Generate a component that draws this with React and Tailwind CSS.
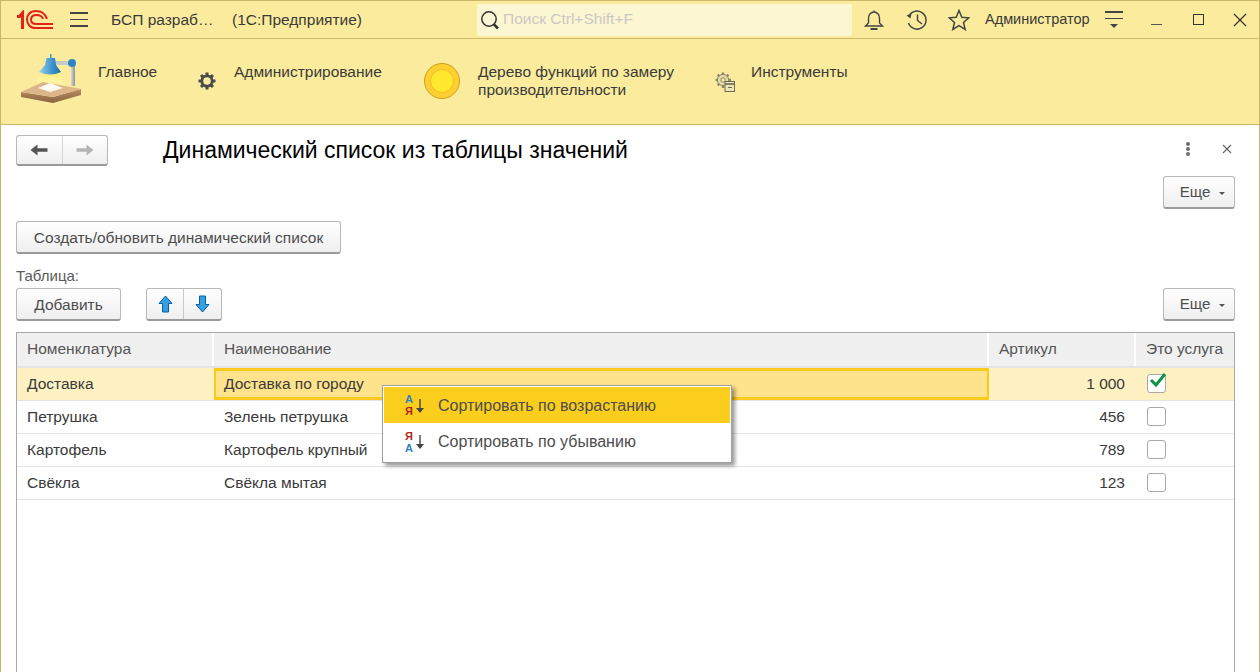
import React from "react";

const rows = [
  { name: "Доставка", title: "Доставка по городу", code: "1 000", service: true, active: true },
  { name: "Петрушка", title: "Зелень петрушка", code: "456" },
  { name: "Картофель", title: "Картофель крупный", code: "789" },
  { name: "Свёкла", title: "Свёкла мытая", code: "123" },
];

const btn =
  "flex items-center justify-center rounded-[3px] border border-[#b8b8b8] border-b-[#9a9a9a] border-b-2 bg-gradient-to-b from-white to-[#efefef] text-[#4d4d4d]";

function Logo() {
  return (
    <svg width="38" height="20" viewBox="0 0 38 20" fill="none" stroke="#e2231a">
      <path d="M1 6.5 H3.5 L6.5 3 V19" strokeWidth="3" />
      <path d="M31 9 C29 3 25 1 20 1 C14 1 11 5 11 9.5 C11 14 14 18 20 18 H37" strokeWidth="2" />
      <path d="M27 9 C26 6 23 5 20.5 5 C17 5 15 7 15 9.5 C15 12 17 14 20.5 14 H37" strokeWidth="2" />
    </svg>
  );
}

function Lamp() {
  return (
    <svg width="62" height="50" viewBox="0 0 62 50">
      <defs>
        <linearGradient id="shade" x1="0" y1="0" x2="1" y2="0">
          <stop offset="0" stopColor="#9ad2f0" />
          <stop offset="0.6" stopColor="#3d93cc" />
          <stop offset="1" stopColor="#1f6fa8" />
        </linearGradient>
        <linearGradient id="beam" x1="0" y1="0" x2="0" y2="1">
          <stop offset="0" stopColor="#fff27a" />
          <stop offset="1" stopColor="#fff9c8" stopOpacity="0.4" />
        </linearGradient>
        <linearGradient id="pole" x1="0" y1="0" x2="1" y2="0">
          <stop offset="0" stopColor="#d8dadb" />
          <stop offset="1" stopColor="#8f9396" />
        </linearGradient>
        <linearGradient id="side" x1="0" y1="0" x2="0" y2="1">
          <stop offset="0" stopColor="#b88d62" />
          <stop offset="1" stopColor="#8a633f" />
        </linearGradient>
      </defs>
      <path d="M33 7 H52 V11 H37 Z" fill="#c6c8c9" />
      <rect x="51" y="9" width="4" height="23" fill="url(#pole)" />
      <path d="M21 19 H39 L46 34 L14 36 Z" fill="url(#beam)" />
      <path d="M1 38 L33 43 L61 35 V41 L33 49 L1 43 Z" fill="url(#side)" />
      <path d="M1 38 L23 28 L61 35 L33 43 Z" fill="#dcb58a" />
      <path d="M18 34 L30 29 L43 34 L30 38 Z" fill="#fdfbf0" />
      <path d="M30 0 H31.5 V4 H35 L36 11 L41 18 Q30 23 19 18 L25 11 L26.5 4 H30 Z" fill="url(#shade)" />
      <circle cx="52" cy="9" r="4" fill="#2a86c4" />
    </svg>
  );
}

function Gear() {
  return (
    <svg width="20" height="20" viewBox="0 0 20 20">
      <g stroke="#4a4a4a" strokeWidth="3">
        <path d="M10 1.5 V18.5 M1.5 10 H18.5 M4 4 L16 16 M16 4 L4 16" />
      </g>
      <circle cx="10" cy="10" r="5.2" fill="#fbec9d" stroke="#4a4a4a" strokeWidth="2.8" />
    </svg>
  );
}

function ToolsIcon() {
  return (
    <svg width="22" height="22" viewBox="0 0 22 22">
      <g stroke="#8a8568" strokeWidth="2.4" fill="none">
        <path d="M9 1.5 V17 M1.5 9 H17 M3.6 3.6 L14.4 14.4 M14.4 3.6 L3.6 14.4" />
      </g>
      <circle cx="9" cy="9" r="5.6" fill="#e6dcab" stroke="#8a8568" />
      <circle cx="9" cy="9" r="2.2" fill="#fbec9d" stroke="#8a8568" />
      <rect x="11" y="10.5" width="9.5" height="10" fill="#efe6b5" stroke="#6d6a55" />
      <path d="M11 13 H20.5" stroke="#6d6a55" strokeWidth="1.6" />
      <path d="M14 16.5 H18" stroke="#6d6a55" />
    </svg>
  );
}

function Arrow({ dir, color }) {
  return (
    <svg width="18" height="14" viewBox="0 0 18 14" fill={color} className={dir === "right" ? "rotate-180" : ""}>
      <path d="M0.5 7 L7.5 1.5 V5.2 H17.5 V8.8 H7.5 V12.5 Z" />
    </svg>
  );
}

function BlueArrow({ down }) {
  return (
    <svg width="15" height="18" viewBox="0 0 15 18" className={down ? "rotate-180" : ""}>
      <path d="M7.5 1 L14 8.5 H10.5 V17 H4.5 V8.5 H1 Z" fill="#35a0e6" stroke="#0f5f94" strokeWidth="1" />
    </svg>
  );
}

function Caret() {
  return <span className="ml-[9px] mt-[2px] h-0 w-0 border-x-[3px] border-t-[3px] border-x-transparent border-t-[#555]" />;
}

function More() {
  return (
    <div className={`${btn} h-[33px] w-[72px] pl-[7px] pt-[1px] text-[15px]`}>
      Еще
      <Caret />
    </div>
  );
}

function SortIcon({ desc }) {
  const red = <span className="text-[#b3261e]">Я</span>;
  const blue = <span className="text-[#2f7fc1]">А</span>;
  return (
    <div className="flex w-[20px] items-center">
      <div className="flex w-[9px] flex-col gap-[1px] text-[11px] font-bold leading-[11px]">
        {desc ? red : blue}
        {desc ? blue : red}
      </div>
      <svg width="10" height="16" viewBox="0 0 10 16" className="ml-[1px]">
        <path d="M5 1 V11" stroke="#444" strokeWidth="1.4" />
        <path d="M1 10 H9 L5 15 Z" fill="#444" />
      </svg>
    </div>
  );
}

function SectionLink({ icon, iconBox, text, textBox }) {
  return (
    <div className="flex">
      <div className={iconBox}>{icon}</div>
      <div className={`pt-[24px] text-[15.5px] leading-[18px] text-[#3a3a3a] ${textBox}`}>{text}</div>
    </div>
  );
}

export default function App() {
  return (
    <div className="relative flex h-[672px] w-[1260px] flex-col overflow-hidden border-x border-t border-[#c9b868] bg-white font-['Liberation_Sans',Arial,sans-serif]">
      {/* top bar */}
      <header className="flex h-[38px] shrink-0 items-center border-b border-[#c9b868] bg-[#fbec9d] text-[15.5px] text-[#3a3a3a]">
        <div className="ml-[15px] w-[54px]">
          <Logo />
        </div>
        <div className="flex w-[18px] flex-col gap-[5px]">
          <span className="h-[1.5px] bg-[#444]" />
          <span className="h-[1.5px] bg-[#444]" />
          <span className="h-[1.5px] bg-[#444]" />
        </div>
        <span className="ml-[23px] w-[121px]">БСП разраб…</span>
        <span className="w-[245px]">(1С:Предприятие)</span>
        <div className="flex h-[32px] w-[375px] items-center rounded-[3px] bg-[#fdf6d2] pl-[3px] text-[#c9c9c3]">
          <svg width="20" height="22" viewBox="0 0 20 22" fill="none" stroke="#333" className="mr-[3px]">
            <circle cx="9" cy="10" r="7.2" strokeWidth="1.5" />
            <path d="M14 15.5 L18 19.5" strokeWidth="2.6" />
          </svg>
          <span className="mb-[2px]">Поиск Ctrl+Shift+F</span>
        </div>
        <svg width="20" height="22" viewBox="0 0 20 22" fill="none" stroke="#444" strokeWidth="1.4" className="ml-[12px]">
          <path d="M10 1.5 V3 M4.5 14 V9 A5.5 6 0 0 1 15.5 9 V14 L18.5 17 H1.5 Z" />
          <path d="M6.5 20 H13.5" strokeWidth="2" />
        </svg>
        <svg width="22" height="22" viewBox="0 0 22 22" fill="none" stroke="#444" strokeWidth="1.5" className="ml-[22px]">
          <path d="M3 7 A9 9 0 1 1 2.5 14" />
          <path d="M0.5 6.5 L4.5 9.5 L5.5 4.5 Z" fill="#444" stroke="none" />
          <path d="M11.5 5.5 V11.5 L16 15" />
        </svg>
        <svg width="22" height="22" viewBox="0 0 22 22" fill="none" stroke="#444" strokeWidth="1.5" className="ml-[20px]">
          <path d="M11 1.5 L13.8 8.2 L20.8 8.8 L15.5 13.4 L17.2 20.5 L11 16.7 L4.8 20.5 L6.5 13.4 L1.2 8.8 L8.2 8.2 Z" />
        </svg>
        <span className="ml-[15px] w-[120px] text-[14.5px]">Администратор</span>
        <div className="flex w-[18px] flex-col items-center">
          <span className="h-[1.5px] w-[18px] bg-[#444]" />
          <span className="mt-[5px] h-[1.5px] w-[18px] bg-[#444]" />
          <span className="mt-[5px] h-0 w-0 border-x-[4px] border-t-[4px] border-x-transparent border-t-[#444]" />
        </div>
        <span className="ml-[28px] mt-[10px] h-[1.5px] w-[11px] bg-[#555]" />
        <span className="ml-[31px] h-[11px] w-[11px] border-[1.5px] border-[#333]" />
        <svg width="14" height="14" viewBox="0 0 14 14" stroke="#333" strokeWidth="1.2" className="ml-[29px]">
          <path d="M1 1 L13 13 M13 1 L1 13" />
        </svg>
      </header>

      {/* sections */}
      <nav className="flex h-[86px] shrink-0 border-b border-[#c9b868] bg-[#fbec9d]">
        <SectionLink icon={<Lamp />} iconBox="ml-[19px] w-[78px] pt-[15px]" text="Главное" textBox="w-[90px]" />
        <SectionLink icon={<Gear />} iconBox="w-[46px] pt-[32px] pl-[9px]" text="Администрирование" textBox="w-[188px]" />
        <SectionLink
          icon={
            <div className="flex h-[36px] w-[36px] items-center justify-center rounded-full border border-[#c9a21c] bg-[#fdcf33]">
              <div className="h-[24px] w-[24px] rounded-full border border-[#f2bf1e] bg-[#ffe82e]" />
            </div>
          }
          iconBox="w-[56px] pt-[24px] pl-[2px]"
          text={
            <>
              Дерево функций по замеру
              <br />
              производительности
            </>
          }
          textBox="w-[234px]"
        />
        <SectionLink icon={<ToolsIcon />} iconBox="w-[39px] pt-[32px] pl-[2px]" text="Инструменты" textBox="w-[110px]" />
      </nav>

      {/* form */}
      <main className="flex min-h-0 flex-1 flex-col pl-[15px] pr-[24px]">
        <div className="mt-[10px] flex h-[31px] items-center">
          <div className={`${btn} h-[31px] w-[92px]`}>
            <div className="flex h-full w-[47px] items-center justify-center border-r border-[#d5d5d5]">
              <Arrow color="#555" />
            </div>
            <div className="flex h-full w-[45px] items-center justify-center">
              <Arrow dir="right" color="#b5b5b5" />
            </div>
          </div>
          <h1 className="ml-[55px] text-[23px] font-normal text-black">Динамический список из таблицы значений</h1>
          <svg width="6" height="14" viewBox="0 0 6 14" fill="#6d6d6d" className="mb-[4px] ml-auto mr-[31px]">
            <circle cx="3" cy="2" r="2" />
            <circle cx="3" cy="7" r="2" />
            <circle cx="3" cy="12" r="2" />
          </svg>
          <svg width="10" height="10" viewBox="0 0 10 10" stroke="#666" strokeWidth="1.2" className="mb-[4px] mr-[3px]">
            <path d="M1 1 L9 9 M9 1 L1 9" />
          </svg>
        </div>

        <div className="mt-[10px] flex justify-end">
          <More />
        </div>

        <div className={`${btn} mt-[12px] h-[33px] w-[325px] pt-[1px] text-[15.5px]`}>Создать/обновить динамический список</div>

        <div className="mt-[13px] h-[17px] text-[15px] leading-[17px] text-[#5a5a5a]">Таблица:</div>

        <div className="mt-[4px] flex">
          <div className={`${btn} h-[33px] w-[105px] pt-[1px] text-[15.5px]`}>Добавить</div>
          <div className={`${btn} ml-[25px] h-[33px] w-[76px]`}>
            <div className="flex h-full w-[38px] items-center justify-center border-r border-[#c9c9c9]">
              <BlueArrow />
            </div>
            <div className="flex h-full w-[38px] items-center justify-center">
              <BlueArrow down />
            </div>
          </div>
          <div className="ml-auto">
            <More />
          </div>
        </div>

        {/* table */}
        <div className="mt-[11px] flex-1 border-x border-t border-[#a8a8a8] text-[15.5px] text-[#3a3a3a]">
          <div className="grid h-[35px] grid-cols-[197px_775px_147px_98px] border-b-2 border-[#e4e4e4] bg-[#f0f0f0] text-[#555]">
            <div className="border-r-2 border-white pl-[10px] leading-[32px]">Номенклатура</div>
            <div className="border-r-2 border-white pl-[10px] leading-[32px]">Наименование</div>
            <div className="border-r-2 border-white pl-[10px] leading-[32px]">Артикул</div>
            <div className="pl-[10px] leading-[32px]">Это услуга</div>
          </div>
          {rows.map((r) => (
            <div
              key={r.name}
              className={`grid h-[33px] grid-cols-[197px_775px_147px_98px] border-b border-[#e4e4e4] ${
                r.active ? "bg-[#fdf1c2]" : "bg-white"
              }`}
            >
              <div className="pl-[10px] leading-[32px]">{r.name}</div>
              {r.active ? (
                <div className="border-[3px] border-l-2 border-r-2 border-[#fcc91d] bg-[#fee28c] pl-[8px] leading-[26px]">
                  {r.title}
                </div>
              ) : (
                <div className="pl-[10px] leading-[32px]">{r.title}</div>
              )}
              <div className="pr-[11px] text-right leading-[32px]">{r.code}</div>
              <div className="flex items-center pb-[2px] pl-[11px]">
                <div className="relative h-[19px] w-[19px] rounded-[3px] border border-[#a8a8a8] bg-white">
                  {r.service && (
                    <svg width="18" height="18" viewBox="0 0 18 18" className="absolute left-[1px] top-[-4px]">
                      <path d="M2 9 L7 14 L16 3" fill="none" stroke="#0e9447" strokeWidth="3" />
                    </svg>
                  )}
                </div>
              </div>
            </div>
          ))}
        </div>
      </main>

      {/* context menu */}
      <div className="absolute left-[381px] top-[384px] h-[78px] w-[350px] border border-[#a0a0a0] bg-white p-[1px] text-[16px] text-[#4d4d4d] shadow-[3px_3px_4px_rgba(0,0,0,0.4)]">
        <div className="flex h-[36px] items-center bg-[#fbcd1d] pl-[21px] pt-[1px]">
          <SortIcon />
          <span className="ml-[13px]">Сортировать по возрастанию</span>
        </div>
        <div className="flex h-[37px] items-center pl-[21px] pt-[1px]">
          <SortIcon desc />
          <span className="ml-[13px]">Сортировать по убыванию</span>
        </div>
      </div>
    </div>
  );
}
